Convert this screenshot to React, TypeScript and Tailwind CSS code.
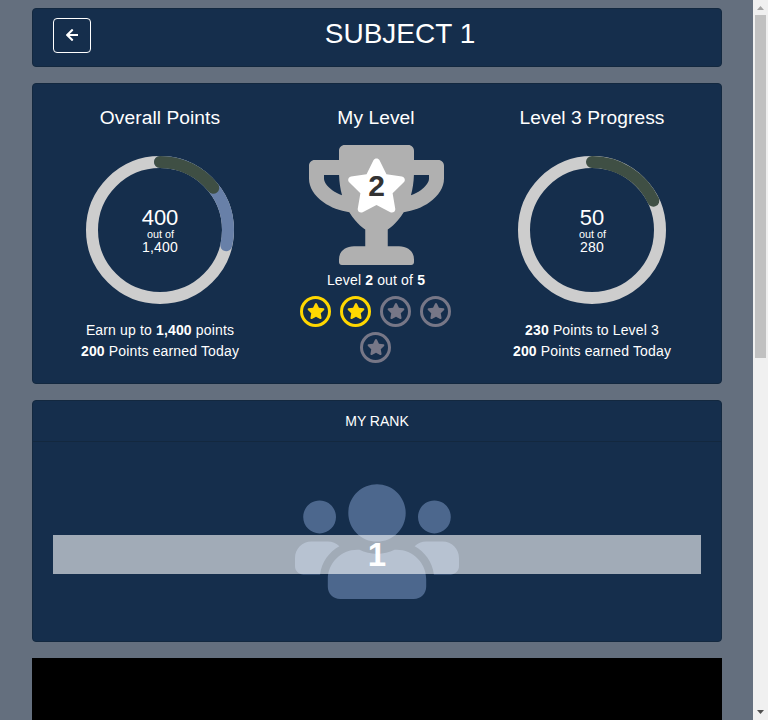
import { FaArrowLeft, FaStar, FaTrophy, FaUsers } from "react-icons/fa";

const CARD = "rounded-[4px] border border-[#13283f] bg-[#152e4c]";
const BODY_TEXT = "text-[14px] leading-[21px] tracking-[0.15px]";

type Arc = { fraction: number; color: string };

function Ring({ arcs, value, total }: { arcs: Arc[]; value: string; total: string }) {
  const r = 68;
  const length = 2 * Math.PI * r;
  return (
    <div className="relative h-[148px] w-[148px]">
      <svg viewBox="0 0 148 148" className="block h-full w-full">
        <circle cx="74" cy="74" r={r} fill="none" stroke="#cdcdcd" strokeWidth="12" />
        {arcs.map((arc) => (
          <circle
            key={arc.color}
            cx="74"
            cy="74"
            r={r}
            fill="none"
            stroke={arc.color}
            strokeWidth="12"
            strokeLinecap="round"
            strokeDasharray={`${arc.fraction * length} ${length}`}
            transform="rotate(-90 74 74)"
          />
        ))}
      </svg>
      <div className="absolute inset-0 flex flex-col items-center pt-[50px]">
        <span className="text-[22px] leading-[23px]">{value}</span>
        <span className="pl-px text-[10.8px] leading-[11px]">out of</span>
        <span className="text-[14px] leading-[15px] tracking-[0.15px]">{total}</span>
      </div>
    </div>
  );
}

function Badge({ earned }: { earned: boolean }) {
  return (
    <span
      className={`flex h-[31px] w-[31px] items-start justify-center rounded-full border-[3px] pt-[4px] ${
        earned ? "border-[#ffd700] text-[#ffd700]" : "border-[#777787] text-[#777787]"
      }`}
    >
      <FaStar className="ml-px h-4 w-[18px] shrink-0" />
    </span>
  );
}

function Title({ children }: { children: string }) {
  return <h2 className="h-[23px] text-[19.2px] leading-[23px] tracking-[0.06px]">{children}</h2>;
}

export default function App() {
  return (
    <div className="flex h-[720px] w-[768px] overflow-hidden bg-[#646f7e] font-['Liberation_Sans',Arial,sans-serif] text-white">
      <main className="flex w-[753px] flex-col gap-4 pt-2 pl-8">
        <header className={`${CARD} flex h-[59px] w-[690px] shrink-0 px-5 pt-[9px]`}>
          <button className="flex h-[35px] w-[38px] items-start justify-center rounded-[4px] border border-white pt-[9px]">
            <FaArrowLeft className="h-[14px] w-[12.25px]" />
          </button>
          <h1 className="flex-1 pl-[8px] text-center text-[28px] leading-[32px]">SUBJECT 1</h1>
        </header>

        <section className={`${CARD} grid h-[301px] w-[690px] shrink-0 grid-cols-3 pr-[21px] pl-[19px] pt-[22px]`}>
          <div className="flex flex-col items-center">
            <Title>Overall Points</Title>
            <div className="mt-[27px]">
              <Ring
                value="400"
                total="1,400"
                arcs={[
                  { fraction: 400 / 1400, color: "#6880a8" },
                  { fraction: 200 / 1400, color: "#3f4f44" },
                ]}
              />
            </div>
            <div className={`${BODY_TEXT} mt-4 text-center`}>
              <p>Earn up to <b>1,400</b> points</p>
              <p><b>200</b> Points earned Today</p>
            </div>
          </div>

          <div className="flex flex-col items-center">
            <Title>My Level</Title>
            <div className="relative mt-4 ml-px h-[120px] w-[135px]">
              <FaTrophy className="h-[120px] w-[135px] text-[#b0b0b0]" />
              <FaStar className="absolute top-[13px] left-[37px] h-[55px] w-[61px]" />
              <b className="absolute inset-x-0 top-[24px] text-center text-[30px] leading-[34px] text-[#333]">2</b>
            </div>
            <p className={`${BODY_TEXT} mt-[5px]`}>Level <b>2</b> out of <b>5</b></p>
            <div className="mt-[5px] mr-[2px] flex w-[160px] flex-wrap justify-center gap-x-[9px] gap-y-[5px]">
              <Badge earned />
              <Badge earned />
              <Badge earned={false} />
              <Badge earned={false} />
              <Badge earned={false} />
            </div>
          </div>

          <div className="flex flex-col items-center">
            <Title>Level 3 Progress</Title>
            <div className="mt-[27px]">
              <Ring value="50" total="280" arcs={[{ fraction: 50 / 280, color: "#3f4f44" }]} />
            </div>
            <div className={`${BODY_TEXT} mt-4 text-center`}>
              <p><b>230</b> Points to Level 3</p>
              <p><b>200</b> Points earned Today</p>
            </div>
          </div>
        </section>

        <section className={`${CARD} h-[242px] w-[690px] shrink-0`}>
          <h2 className="h-[41px] border-b border-[#13283f] text-center text-[14px] leading-[41px]">MY RANK</h2>
          <div className="relative mx-5 flex h-[199px] justify-center pt-[34px]">
            <FaUsers className="h-[131.2px] w-[164px] text-[#4c678d]" />
            <div className="absolute inset-x-0 top-[93px] h-[39px] bg-white/60 text-center text-[33px] leading-[39px] font-bold">1</div>
          </div>
        </section>

        <div className="h-[62px] w-[690px] shrink-0 bg-black" />
      </main>

      <aside className="flex w-[15px] flex-col items-center bg-[#f0f0f0]">
        <svg className="h-[15px] w-[15px] shrink-0" viewBox="0 0 15 15">
          <path d="M4 10h7L7.5 6z" fill="#a3a3a3" />
        </svg>
        <div className="h-[343px] w-[11px] bg-[#c1c1c1]" />
        <svg className="mt-auto h-[15px] w-[15px] shrink-0" viewBox="0 0 15 15">
          <path d="M4 5h7L7.5 9z" fill="#505050" />
        </svg>
      </aside>
    </div>
  );
}
